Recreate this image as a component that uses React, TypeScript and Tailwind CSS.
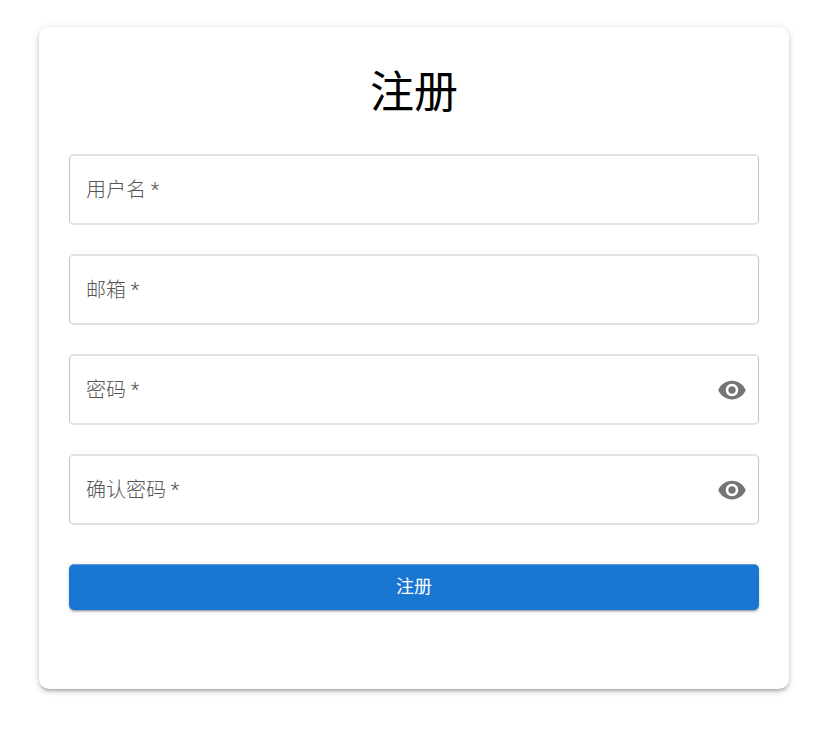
import React from "react";

function Eye() {
  return (
    <svg viewBox="0 0 24 24" className="w-[30px] h-[30px] fill-[#757575]" aria-hidden="true">
      <path d="M12 4.5C7 4.5 2.73 7.61 1 12c1.73 4.39 6 7.5 11 7.5s9.27-3.11 11-7.5c-1.73-4.39-6-7.5-11-7.5M12 17c-2.76 0-5-2.24-5-5s2.24-5 5-5 5 2.24 5 5-2.24 5-5 5m0-8c-1.66 0-3 1.34-3 3s1.34 3 3 3 3-1.34 3-3-1.34-3-3-3" />
    </svg>
  );
}

function Field({ label, eye }: { label: string; eye?: boolean }) {
  return (
    <div className="h-[71px] flex items-center justify-between pl-[16px] pr-[11px] border-x border-y-2 border-x-[#c4c4c4] border-y-[#e2e2e2] rounded-[5px] bg-white">
      <span className="text-[20px] leading-[24px] text-[#555555] font-light">{label}</span>
      {eye && <Eye />}
    </div>
  );
}

export default function App() {
  return (
    <div className="min-h-[729px] bg-white pt-[27px] px-[39px] font-['Roboto','Noto_Sans_CJK_SC',sans-serif]">
      <div className="w-[750px] h-[662px] bg-white rounded-[10px] px-[30px] pt-[30px] shadow-[0_3px_3px_-2px_rgba(0,0,0,0.2),0_3px_4px_0_rgba(0,0,0,0.14),0_1px_8px_0_rgba(0,0,0,0.12)]">
        <h1 className="text-[44px] leading-[70px] text-center text-black font-normal translate-y-px">注册</h1>
        <div className="mt-[27px] flex flex-col gap-[29px]">
          <Field label="用户名 *" />
          <Field label="邮箱 *" />
          <Field label="密码 *" eye />
          <Field label="确认密码 *" eye />
        </div>
        <button className="mt-[39px] w-full h-[46px] pb-[2px] border-t border-t-[#5f9fe0] rounded-[5px] bg-[#1976d2] text-white text-[18px] shadow-[0_3px_1px_-2px_rgba(0,0,0,0.2),0_2px_2px_0_rgba(0,0,0,0.14),0_1px_5px_0_rgba(0,0,0,0.12)]">
          注册
        </button>
      </div>
    </div>
  );
}
